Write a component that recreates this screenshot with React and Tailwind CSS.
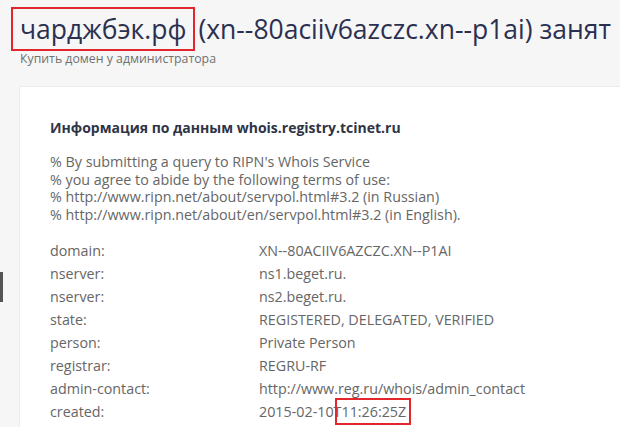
export default function App() {
  const rows = [
    ["domain:", "XN--80ACIIV6AZCZC.XN--P1AI"],
    ["nserver:", "ns1.beget.ru."],
    ["nserver:", "ns2.beget.ru."],
    ["state:", "REGISTERED, DELEGATED, VERIFIED"],
    ["person:", "Private Person"],
    ["registrar:", "REGRU-RF"],
    ["admin-contact:", "http://www.reg.ru/whois/admin_contact"],
  ];
  return (
    <div className="w-[620px] h-[427px] overflow-hidden bg-[#f6f6f6] relative font-['Open_Sans',sans-serif]">
      <div className="pl-[11px] pt-[7px]">
        <h1 className="flex items-center text-[26.5px] leading-[40px] text-[#2b3050] whitespace-nowrap">
          <span className="border-2 border-[#e3262c] px-[7px] leading-[40px]">чарджбэк.рф</span>
          <span className="ml-[3px]">(xn--80aciiv6azczc.xn--p1ai) занят</span>
        </h1>
        <div className="text-[12.3px] leading-[14px] text-[#707070] ml-[9px] mt-[1px]">Купить домен у администратора</div>
      </div>
      <div className="ml-[19px] mt-[20px] h-[400px] bg-white border-l border-t border-[#ececec] pl-[30px] pt-[32px]">
        <div className="text-[14px] leading-[18px] font-bold text-[#2f3446]">Информация по данным whois.registry.tcinet.ru</div>
        <div className="mt-[16px] text-[14.3px] leading-[17.5px] text-[#666]">
          <div>% By submitting a query to RIPN's Whois Service</div>
          <div>% you agree to abide by the following terms of use:</div>
          <div>% http://www.ripn.net/about/servpol.html#3.2 (in Russian)</div>
          <div>% http://www.ripn.net/about/en/servpol.html#3.2 (in English).</div>
        </div>
        <div className="mt-[16px] grid grid-cols-[209px_1fr] text-[14.3px] leading-[23px] text-[#666]">
          {rows.map(([k, v], i) => (
            <div key={i} className="contents">
              <div>{k}</div>
              <div>{v}</div>
            </div>
          ))}
          <div>created:</div>
          <div>
            2015-02-10T<span className="outline-2 outline-[#e3262c] outline-offset-[2px] ml-[-2px] pl-[2px] pr-[1px]">11:26:25Z</span>
          </div>
        </div>
      </div>
      <div className="absolute left-0 top-[272px] w-[3px] h-[30px] bg-[#555]" />
    </div>
  );
}
